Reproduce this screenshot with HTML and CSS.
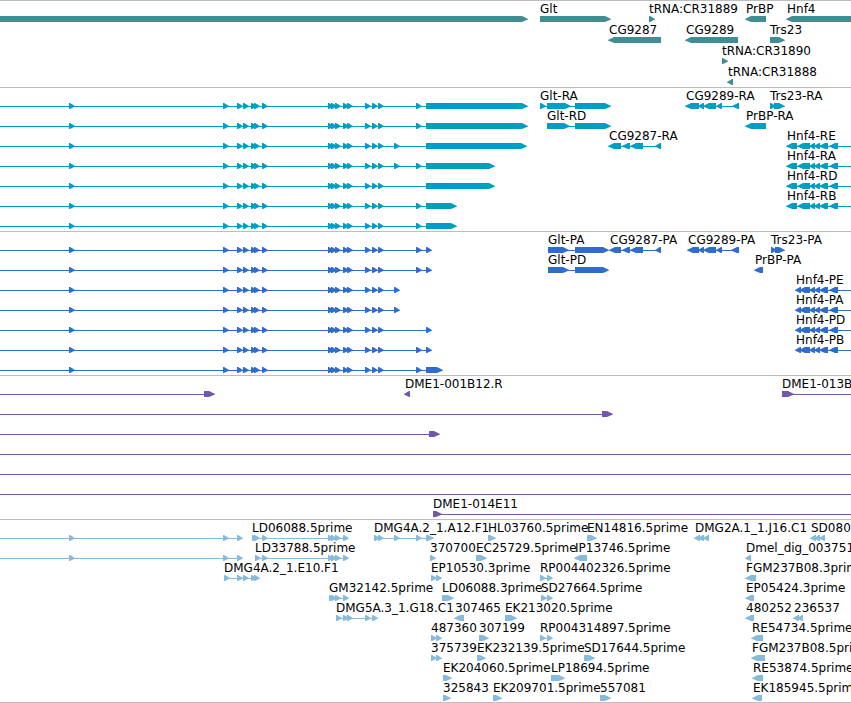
FILE: index.html
```html
<!DOCTYPE html>
<html lang="en">
  <head>
    <meta charset="UTF-8" />
    <meta name="viewport" content="width=device-width, initial-scale=1.0" />
    <title>Genome Browser</title>
    <link rel="stylesheet" href="styles.css" />
  </head>
  <body>
    <main class="browser">
      <section class="track genes" id="genes" aria-label="Genes"></section>
      <section class="track transcripts" id="transcripts" aria-label="Transcripts"></section>
      <section class="track proteins" id="proteins" aria-label="Proteins"></section>
      <section class="track clones" id="clones" aria-label="Clones"></section>
      <section class="track ests" id="ests" aria-label="ESTs"></section>
    </main>
    <script src="tracks.js"></script>
  </body>
</html>
```
FILE: styles.css
```css
body {
  margin: 0;
  background-color: #ffffff;
  color: #000000;
  font-family: "DejaVu Sans", sans-serif;
  font-size: 12px;
}
.browser {
  overflow: hidden;
  border-bottom: 1px solid #bebebe;
}
.track {
  border-top: 1px solid #bebebe;
  padding-bottom: 3px;
}
.lane {
  display: block;
  width: 100%;
  height: 20px;
  overflow: visible;
}
.lane text {
  fill: #000000;
}
.lane line {
  stroke: currentColor;
  stroke-width: 1px;
  shape-rendering: crispEdges;
}
.lane polygon {
  fill: currentColor;
}
.genes {
  color: #408e94;
  padding-bottom: 2px;
}
.genes .lane {
  height: 21px;
}
.transcripts {
  color: #009fc1;
}
.proteins {
  color: #306ccc;
}
.clones {
  color: #7358a5;
}
.ests {
  color: #87bbdd;
  padding-bottom: 2px;
}
```
FILE: tracks.js
```js
const SVG_NS = "http://www.w3.org/2000/svg";
const START = -20; // feature continues off the left side
const END = 4000; // feature continues off the right side
const HEAD = 5;

// A feature on the forward strand. Exons are [start, end] or just a start
// when the exon is only as long as its arrow head.
function fwd(name, exons, from, to) {
  return { name, exons, from, to, dir: 1 };
}

function rev(name, exons, from, to) {
  return { name, exons, from, to, dir: -1 };
}

const shared = [69, 223, 237, 243, 251, 254, 262, 328, 331, 335, 343, 347, 365, 372, 378];
const long = (...exons) => fwd("", [...shared, ...exons], START);
const hnfR = (name) =>
  rev(name, [[787, 797], [798, 810], 810, 815, [820, 828], [830, 838]], 787, END);
const hnfP = (name) =>
  rev(name, [796, [800, 810], 810, 815, [820, 828], [830, 838]], 796, END);

const tracks = {
  genes: [
    [
      fwd("", [[START, 527]]),
      fwd("Glt", [[540, 610]]),
      fwd("tRNA:CR31889", [649]),
      rev("PrBP", [[746, 766]]),
      rev("Hnf4", [[787, END]]),
    ],
    [
      rev("CG9287", [[609, 661]]),
      rev("CG9289", [[686, 738]]),
      fwd("Trs23", [[770, 784]]),
    ],
    [fwd("tRNA:CR31890", [722])],
    [rev("tRNA:CR31888", [728])],
  ],
  transcripts: [
    [
      long(416, [426, 527]),
      fwd("Glt-RA", [540, [547, 570], [575, 610]]),
      rev("CG9289-RA", [[686, 699], 699, [704, 716], 717, [733, 739]]),
      fwd("Trs23-RA", [770, [774, 784]]),
    ],
    [
      long(416, [426, 527]),
      fwd("Glt-RD", [[547, 569], [575, 610]]),
      rev("PrBP-RA", [[746, 766]]),
    ],
    [
      long(394, [426, 526]),
      rev("CG9287-RA", [[609, 621], [623, 630], [631, 643], 656]),
      hnfR("Hnf4-RE"),
    ],
    [long(394, 416, [426, 494]), hnfR("Hnf4-RA")],
    [long([426, 494]), hnfR("Hnf4-RD")],
    [long(416, [426, 456]), hnfR("Hnf4-RB")],
    [long(416, [426, 456])],
  ],
  proteins: [
    [
      long(416, 426),
      fwd("Glt-PA", [[548, 568], [575, 608]]),
      rev("CG9287-PA", [[610, 621], [623, 630], [631, 643], 656]),
      rev("CG9289-PA", [[688, 699], 699, [704, 716], 717, [732, 739]]),
      fwd("Trs23-PA", [771, [775, 784]]),
    ],
    [
      long(416, 426),
      fwd("Glt-PD", [[548, 568], [575, 608]]),
      rev("PrBP-PA", [[755, 763]]),
    ],
    [long(394), hnfP("Hnf4-PE")],
    [long(394), hnfP("Hnf4-PA")],
    [long(426), hnfP("Hnf4-PD")],
    [long(416, 426), hnfP("Hnf4-PB")],
    [long(416, [426, 442])],
  ],
  clones: [
    [
      fwd("", [[204, 214]], START),
      rev("DME1-001B12.R", [405]),
      fwd("DME1-013B", [[782, 793]], 782, END),
    ],
    [fwd("", [[602, 612]], START)],
    [fwd("", [[429, 439]], START)],
    [fwd("", [], START, END)],
    [fwd("", [], START, END)],
    [fwd("", [], START, END)],
    [fwd("DME1-014E11", [[433, 441]], 433, END)],
  ],
  ests: [
    [
      fwd("", [69, 223, 237], START),
      fwd("LD06088.5prime", [252, 254, 262, 328, 331, 335, 343]),
      fwd("DMG4A.2_1.A12.F1", [374, 378, 394, 416, [426, 433]]),
      fwd("HL03760.5prime", [[488, 495]]),
      fwd("EN14816.5prime", [[587, 596]]),
      rev("DMG2A.1_1.J16.C1", [695, 699, 704]),
      rev("SD080", [811, 815, 820]),
    ],
    [
      fwd("", [69, 223, 237], START),
      fwd("LD33788.5prime", [255, 262, 328, 331, 335, 343]),
      fwd("370700", [430]),
      fwd("EC25729.5prime", [[476, 486]]),
      rev("IP13746.5prime", [[575, 587]]),
      rev("Dmel_dig_003751", [746]),
    ],
    [
      fwd("DMG4A.2_1.E10.F1", [224, 237, 243, 251, 254]),
      fwd("EP10530.3prime", [431, 436]),
      fwd("RP004402326.5prime", [540, 547]),
      rev("FGM237B08.3prime", [[746, 756]]),
    ],
    [
      fwd("GM32142.5prime", [329, 331, 335, 343]),
      fwd("LD06088.3prime", [[442, 453]]),
      fwd("SD27664.5prime", [541, 547]),
      rev("EP05424.3prime", [[746, 754]]),
    ],
    [
      fwd("DMG5A.3_1.G18.C1", [336, 343, 347, 365, 372]),
      rev("307465", [[455, 464]]),
      fwd("EK213020.5prime", [[505, 516]]),
      rev("480252", [[746, 754]]),
      rev("236537", [794, 798]),
    ],
    [
      fwd("487360", [431, 436]),
      fwd("307199", [[479, 488]]),
      fwd("RP004314897.5prime", [540, 547]),
      rev("RE54734.5prime", [[752, 763]]),
    ],
    [
      fwd("375739", [431, 436]),
      fwd("EK232139.5prime", [[477, 485]]),
      fwd("SD17644.5prime", [[584, 594]]),
      rev("FGM237B08.5prime", [[752, 765]]),
    ],
    [
      fwd("EK204060.5prime", [[443, 451]]),
      fwd("LP18694.5prime", [[551, 564]]),
      rev("RE53874.5prime", [[753, 763]]),
    ],
    [
      fwd("325843", [[443, 450]]),
      fwd("EK209701.5prime", [[493, 501]]),
      fwd("557081", [[600, 610]]),
      rev("EK185945.5prime", [[753, 762]]),
    ],
  ],
};

function add(parent, tag, attrs) {
  const node = document.createElementNS(SVG_NS, tag);
  for (const key in attrs) {
    node.setAttribute(key, attrs[key]);
  }
  parent.appendChild(node);
  return node;
}

// Box with a pointed end; the head overshoots by a pixel so the tip stays visible
function exonPoints(start, end, dir) {
  const tail = dir > 0 ? start : end;
  const tip = dir > 0 ? end + 1 : start - 1;
  const length = end - start;
  const neck = length > HEAD ? tip - dir * (HEAD + 1) : tail + dir;
  return `${tail},15 ${neck},15 ${tip},18 ${tip},18.5 ${neck},21 ${tail},21`;
}

function drawFeature(svg, feature) {
  const exons = feature.exons.map((e) => (Array.isArray(e) ? e : [e, e + HEAD]));
  const from = feature.from ?? exons[0][0];
  const to = feature.to ?? exons[exons.length - 1][1] - 1;

  // Intron line, only needed when the exons don't cover the feature
  if (exons.length !== 1 || feature.from !== undefined) {
    add(svg, "line", { x1: from, x2: to, y1: 18.5, y2: 18.5 });
  }
  for (const [start, end] of exons) {
    add(svg, "polygon", { points: exonPoints(start, end, feature.dir) });
  }
  if (feature.name) {
    add(svg, "text", { x: from, y: 12 }).textContent = feature.name;
  }
}

for (const id in tracks) {
  const track = document.getElementById(id);
  for (const lane of tracks[id]) {
    const svg = add(track, "svg", { class: "lane" });
    lane.forEach((feature) => drawFeature(svg, feature));
  }
}
```
